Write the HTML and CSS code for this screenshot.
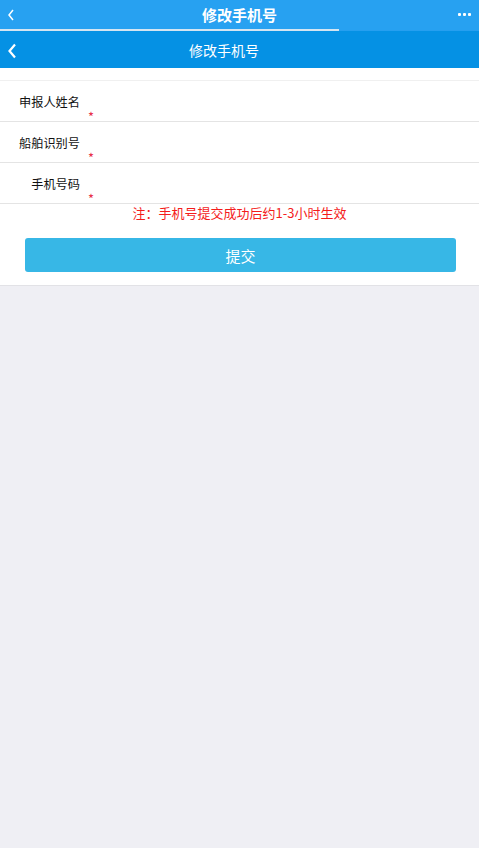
FILE: index.html
```html
<!DOCTYPE html>
<html lang="zh-CN">
<head>
    <meta charset="UTF-8">
    <meta name="viewport" content="width=device-width, initial-scale=1.0">
    <title>修改手机号</title>
    <link rel="stylesheet" href="styles.css">
</head>
<body>
    <div class="topbar">
        <span class="top-back">
            <svg width="8" height="12" viewBox="0 0 8 12"><path d="M6 1 L2 6 L6 11" fill="none" stroke="#fff" stroke-width="1.5"/></svg>
        </span>
        <span class="top-title">修改手机号</span>
        <span class="top-more"><i></i><i></i><i></i></span>
    </div>
    <div class="progress"><div class="progress-bar"></div></div>
    <header>
        <span class="back">
            <svg width="10" height="16" viewBox="0 0 10 16"><path d="M8 1.5 L2.5 8 L8 14.5" fill="none" stroke="#fff" stroke-width="2.2"/></svg>
        </span>
        <h1>修改手机号</h1>
    </header>

    <div class="panel">
        <div class="form">
            <div class="row">
                <label>申报人姓名</label>
                <span class="star">*</span>
                <input type="text">
            </div>
            <div class="row">
                <label>船舶识别号</label>
                <span class="star">*</span>
                <input type="text">
            </div>
            <div class="row">
                <label>手机号码</label>
                <span class="star">*</span>
                <input type="tel">
            </div>
        </div>
        <p class="note">注：手机号提交成功后约1-3小时生效</p>
        <div class="actions">
            <button>提交</button>
        </div>
    </div>
</body>
</html>
```

FILE: styles.css
```css
body {
    margin: 0;
    padding: 0;
    background-color: #efeff4;
    font-family: "Noto Sans CJK SC", "Noto Sans", Arial, sans-serif;
    min-height: 848px;
}
.topbar {
    height: 29px;
    background-color: #27a1f1;
    display: flex;
    align-items: center;
    color: #fff;
}
.top-back {
    width: 30px;
    padding-right: 8px;
    box-sizing: border-box;
    display: flex;
    align-items: center;
    justify-content: center;
}
.top-title {
    flex: 1;
    text-align: center;
    font-size: 15px;
    font-weight: bold;
    line-height: 29px;
}
.top-more {
    width: 30px;
    display: flex;
    gap: 2px;
    justify-content: center;
    padding-bottom: 1px;
}
.top-more i {
    width: 3px;
    height: 3px;
    background-color: #fff;
    border-radius: 1px;
}
.progress {
    height: 2px;
    background-color: #27a1f1;
}
.progress-bar {
    width: 339px;
    height: 2px;
    background-color: #d5e6f3;
}
header {
    height: 37px;
    background-color: #0591e4;
    display: flex;
    align-items: center;
    box-shadow: 0 1px 2px rgba(0, 0, 0, 0.15);
}
header h1 {
    flex: 1;
    margin: 0;
    text-align: center;
    color: #fff;
    font-size: 14px;
    font-weight: normal;
    padding-right: 55px;
}
.back {
    width: 24px;
    display: flex;
    justify-content: center;
    padding-top: 2px;
}
.panel {
    background-color: #fff;
    padding-top: 12px;
    padding-bottom: 13px;
    border-bottom: 1px solid #e2e2e6;
}
.form {
    border-top: 1px solid #f0f0f0;
}
.row {
    display: flex;
    height: 40px;
    border-bottom: 1px solid #e4e4e4;
}
.row label {
    width: 80px;
    text-align: right;
    font-size: 12.2px;
    line-height: 18px;
    padding-top: 12px;
    color: #111;
}
.star {
    align-self: flex-end;
    margin-left: 8px;
    color: #e8304a;
    font-size: 13px;
    line-height: 8px;
}
.row input {
    flex: 1;
    border: none;
    outline: none;
    background: transparent;
    margin-left: 10px;
}
.note {
    margin: 0;
    text-align: center;
    color: #f41c1c;
    font-size: 13px;
    line-height: 18px;
}
.actions {
    padding: 16px 23px 0 25px;
}
.actions button {
    width: 100%;
    height: 34px;
    border: none;
    border-radius: 3px;
    background-color: #37b7e6;
    color: #fff;
    font-size: 15px;
    font-family: inherit;
}
```
